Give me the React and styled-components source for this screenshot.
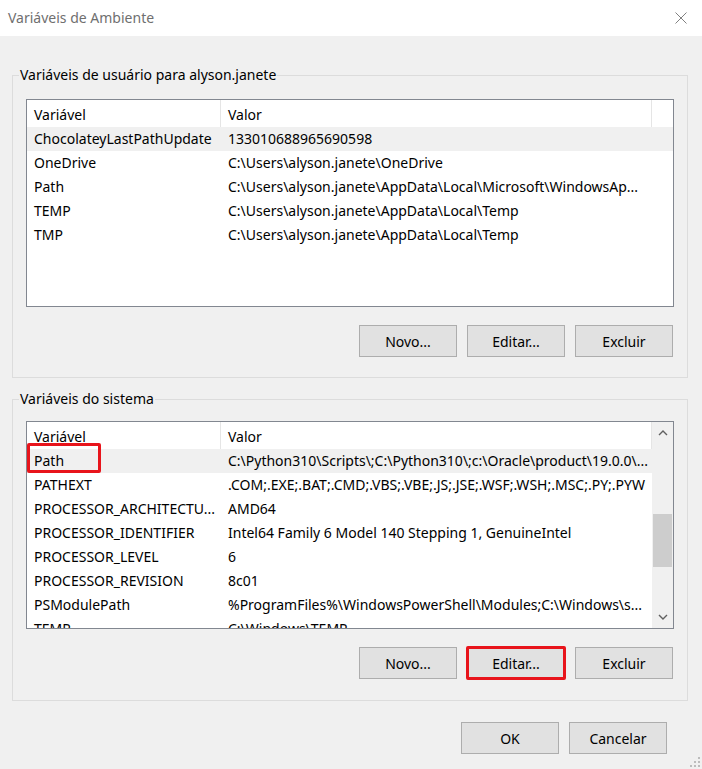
import React from "react";
import styled, { createGlobalStyle } from "styled-components";

const userVars = [
  { name: "ChocolateyLastPathUpdate", value: "133010688965690598", selected: true },
  { name: "OneDrive", value: "C:\\Users\\alyson.janete\\OneDrive" },
  { name: "Path", value: "C:\\Users\\alyson.janete\\AppData\\Local\\Microsoft\\WindowsAp..." },
  { name: "TEMP", value: "C:\\Users\\alyson.janete\\AppData\\Local\\Temp" },
  { name: "TMP", value: "C:\\Users\\alyson.janete\\AppData\\Local\\Temp" },
];

const systemVars = [
  {
    name: "Path",
    value: "C:\\Python310\\Scripts\\;C:\\Python310\\;c:\\Oracle\\product\\19.0.0\\...",
    selected: true,
    marked: true,
  },
  { name: "PATHEXT", value: ".COM;.EXE;.BAT;.CMD;.VBS;.VBE;.JS;.JSE;.WSF;.WSH;.MSC;.PY;.PYW" },
  { name: "PROCESSOR_ARCHITECTU...", value: "AMD64" },
  { name: "PROCESSOR_IDENTIFIER", value: "Intel64 Family 6 Model 140 Stepping 1, GenuineIntel" },
  { name: "PROCESSOR_LEVEL", value: "6" },
  { name: "PROCESSOR_REVISION", value: "8c01" },
  { name: "PSModulePath", value: "%ProgramFiles%\\WindowsPowerShell\\Modules;C:\\Windows\\s..." },
  { name: "TEMP", value: "C:\\Windows\\TEMP" },
];

function Chevron({ down }) {
  return (
    <svg width="10" height="6" viewBox="0 0 10 6">
      <path
        d={down ? "M1 1 L5 5 L9 1" : "M1 5 L5 1 L9 5"}
        fill="none"
        stroke="#606060"
        strokeWidth="1.4"
      />
    </svg>
  );
}

function VarList({ rows, scroll }) {
  return (
    <List>
      <ListMain>
        <HeaderRow>
          <HeaderCell>Variável</HeaderCell>
          <HeaderCell>Valor</HeaderCell>
        </HeaderRow>
        {rows.map((row) => (
          <Row key={row.name} $selected={row.selected}>
            <Cell $marked={row.marked}>{row.name}</Cell>
            <Cell>{row.value}</Cell>
          </Row>
        ))}
      </ListMain>
      {scroll && (
        <ScrollBar>
          <ArrowButton>
            <Chevron />
          </ArrowButton>
          <Track>
            <Thumb $offset={70} $size={53} />
          </Track>
          <ArrowButton>
            <Chevron down />
          </ArrowButton>
        </ScrollBar>
      )}
    </List>
  );
}

function App() {
  return (
    <Window>
      <GlobalStyle />
      <TitleBar>
        <Title>Variáveis de Ambiente</Title>
        <CloseButton>
          <svg width="12" height="12" viewBox="0 0 12 12">
            <path d="M0.5 0.5 L11.5 11.5 M11.5 0.5 L0.5 11.5" stroke="#808080" strokeWidth="1" />
          </svg>
        </CloseButton>
      </TitleBar>
      <Body>
        <Group $top={14} $bottom={20}>
          <Legend>Variáveis de usuário para alyson.janete</Legend>
          <VarList rows={userVars} />
          <ButtonRow>
            <Button>Novo...</Button>
            <Button>Editar...</Button>
            <Button>Excluir</Button>
          </ButtonRow>
        </Group>
        <Group $top={12} $bottom={21}>
          <Legend>Variáveis do sistema</Legend>
          <VarList rows={systemVars} scroll />
          <ButtonRow>
            <Button>Novo...</Button>
            <Button $marked>Editar...</Button>
            <Button>Excluir</Button>
          </ButtonRow>
        </Group>
        <Footer>
          <Button>OK</Button>
          <Button>Cancelar</Button>
        </Footer>
      </Body>
      <Grip>
        <svg width="10" height="10" viewBox="0 0 10 10">
          <rect x="8" y="0" width="2" height="2" fill="#bcbcbc" />
          <rect x="8" y="4" width="2" height="2" fill="#bcbcbc" />
          <rect x="8" y="8" width="2" height="2" fill="#bcbcbc" />
          <rect x="4" y="4" width="2" height="2" fill="#bcbcbc" />
          <rect x="4" y="8" width="2" height="2" fill="#bcbcbc" />
          <rect x="0" y="8" width="2" height="2" fill="#bcbcbc" />
        </svg>
      </Grip>
    </Window>
  );
}

const GlobalStyle = createGlobalStyle`
  html, body {
    margin: 0;
    padding: 0;
    background: #f0f0f0;
  }
  body {
    font-family: "Noto Sans", "Liberation Sans", sans-serif;
    font-size: 14px;
    color: #000;
  }
`;

const Window = styled.div`
  position: relative;
  width: 702px;
  height: 769px;
  display: flex;
  flex-direction: column;
  background: #f0f0f0;
  overflow: hidden;
`;

const TitleBar = styled.div`
  height: 36px;
  flex: none;
  background: #fff;
  display: flex;
  align-items: center;
  justify-content: space-between;
  padding: 0 15px 0 8px;
`;

const Title = styled.div`
  color: #6f6f6f;
  font-size: 14px;
  padding-bottom: 1px;
`;

const CloseButton = styled.div`
  display: flex;
  width: 12px;
  height: 12px;
  margin-bottom: 1px;
`;

const Body = styled.div`
  flex: 1;
  display: flex;
  flex-direction: column;
  padding: 29px 14px 0 12px;
  gap: 11px;
`;

const Group = styled.fieldset`
  margin: 0;
  min-width: 0;
  border: 1px solid #dcdcdc;
  padding: ${(p) => p.$top}px 13px ${(p) => p.$bottom}px 13px;
  display: flex;
  flex-direction: column;
`;

const Legend = styled.legend`
  padding: 0 1px;
  margin-left: -7px;
  line-height: 20px;
  font-size: 14px;
`;

const List = styled.div`
  height: 208px;
  box-sizing: border-box;
  border: 1px solid #828790;
  background: #fff;
  display: flex;
  overflow: hidden;
`;

const ListMain = styled.div`
  flex: 1;
  overflow: hidden;
`;

const HeaderRow = styled.div`
  display: grid;
  grid-template-columns: 194px 431px;
  height: 27px;
`;

const HeaderCell = styled.div`
  border-right: 1px solid #e5e5e5;
  padding: 0 7px;
  display: flex;
  align-items: center;
  padding-top: 1px;
`;

const Row = styled.div`
  display: grid;
  grid-template-columns: 194px 431px;
  height: 24px;
  background: ${(p) => (p.$selected ? "#f0f0f0" : "transparent")};
`;

const Cell = styled.div`
  position: relative;
  padding: 0 0 0 7px;
  line-height: 24px;
  white-space: nowrap;
  overflow: ${(p) => (p.$marked ? "visible" : "hidden")};
  text-overflow: clip;

  ${(p) =>
    p.$marked &&
    `
    &::after {
      content: "";
      position: absolute;
      left: 0;
      top: -6px;
      width: 74px;
      height: 30px;
      box-sizing: border-box;
      border: 3px solid #e8141b;
      border-radius: 2px;
    }
  `}
`;

const ScrollBar = styled.div`
  width: 21px;
  flex: none;
  background: #f0f0f0;
  display: flex;
  flex-direction: column;
`;

const ArrowButton = styled.div`
  height: 22px;
  flex: none;
  display: flex;
  align-items: center;
  justify-content: center;
`;

const Track = styled.div`
  flex: 1;
  display: flex;
  flex-direction: column;
  align-items: center;
`;

const Thumb = styled.div`
  width: 19px;
  margin-top: ${(p) => p.$offset}px;
  height: ${(p) => p.$size}px;
  background: #cdcdcd;
`;

const ButtonRow = styled.div`
  display: flex;
  justify-content: flex-end;
  gap: 10px;
  margin-top: 18px;
  padding-right: 1px;
`;

const Button = styled.button`
  width: 98px;
  height: 32px;
  box-sizing: border-box;
  background: #e1e1e1;
  border: 1px solid #adadad;
  border-radius: 0;
  font-family: "Noto Sans", "Liberation Sans", sans-serif;
  font-size: 14px;
  color: #000;
  padding: 0;
  ${(p) =>
    p.$marked &&
    `
    outline: 3px solid #e8141b;
    outline-offset: -2px;
    border-radius: 1px;
  `}
`;

const Footer = styled.div`
  display: flex;
  justify-content: flex-end;
  gap: 10px;
  margin-top: 10px;
  padding-right: 21px;
`;

const Grip = styled.div`
  position: absolute;
  right: 2px;
  bottom: 2px;
  width: 10px;
  height: 10px;
  display: flex;
`;

export default App;
